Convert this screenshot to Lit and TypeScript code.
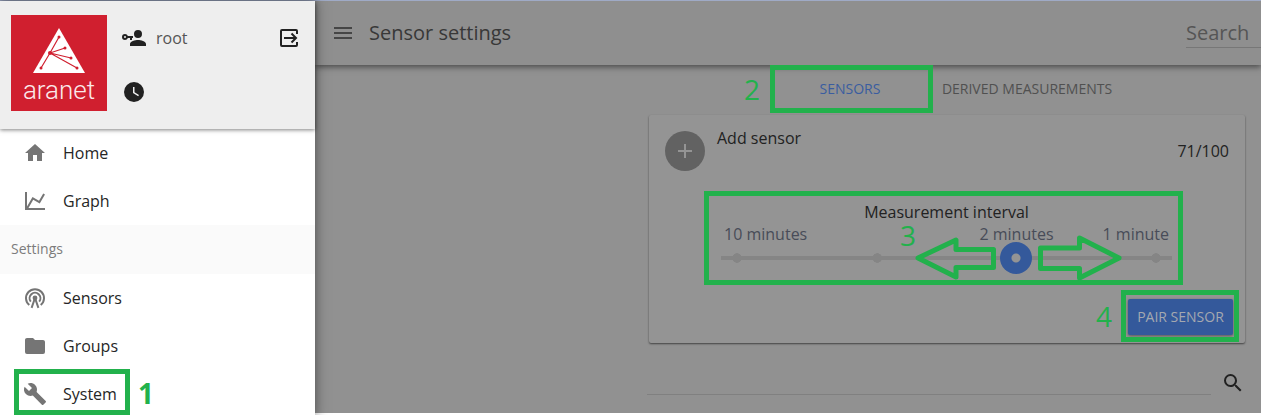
import { LitElement, html, svg, css } from "lit";
import { customElement, property, state } from "lit/decorators.js";

const ICONS: Record<string, string> = {
  home: "M10,20V14H14V20H19V12H22L12,3L2,12H5V20H10Z",
  graph: "M16,11.78L20.24,4.45L21.97,5.45L16.74,14.5L10.23,10.75L5.46,19H22V21H2V3H4V17.54L9.5,8L16,11.78Z",
  groups: "M10,4H4C2.89,4 2,4.89 2,6V18A2,2 0 0,0 4,20H20A2,2 0 0,0 22,18V8C22,6.89 21.1,6 20,6H12L10,4Z",
  system: "M22.7,19L13.6,9.9C14.5,7.6 14,4.9 12.1,3C10.1,1 7.1,0.6 4.7,1.7L9,6L6,9L1.6,4.7C0.4,7.1 0.9,10.1 2.9,12.1C4.8,14 7.5,14.5 9.8,13.6L18.9,22.7C19.3,23.1 19.9,23.1 20.3,22.7L22.6,20.4C23.1,20 23.1,19.3 22.7,19Z",
  user: "M11,10V12H10V14H8V12H5.83C5.42,13.17 4.31,14 3,14A3,3 0 0,1 0,11A3,3 0 0,1 3,8C4.31,8 5.42,8.83 5.83,10H11M3,10A1,1 0 0,0 2,11A1,1 0 0,0 3,12A1,1 0 0,0 4,11A1,1 0 0,0 3,10M16,14C18.67,14 24,15.34 24,18V20H8V18C8,15.34 13.33,14 16,14M16,12A4,4 0 0,1 12,8A4,4 0 0,1 16,4A4,4 0 0,1 20,8A4,4 0 0,1 16,12Z",
  clock: "M12,2A10,10 0 0,0 2,12A10,10 0 0,0 12,22A10,10 0 0,0 22,12A10,10 0 0,0 12,2M16.2,16.2L11,13V7H12.5V12.2L17,14.9L16.2,16.2Z",
  menu: "M3,6H21V8H3V6M3,11H21V13H3V11M3,16H21V18H3V16Z",
  plus: "M19,13H13V19H11V13H5V11H11V5H13V11H19V13Z",
  search: "M9.5,3A6.5,6.5 0 0,1 16,9.5C16,11.11 15.41,12.59 14.44,13.73L14.71,14H15.5L20.5,19L19,20.5L14,15.5V14.71L13.73,14.44C12.59,15.41 11.11,16 9.5,16A6.5,6.5 0 0,1 3,9.5A6.5,6.5 0 0,1 9.5,3M9.5,5C7,5 5,7 5,9.5C5,12 7,14 9.5,14C12,14 14,12 14,9.5C14,7 12,5 9.5,5Z",
};

@customElement("app-icon")
export class AppIcon extends LitElement {
  @property() name = "";

  static styles = css`
    :host { display: block; width: 24px; height: 24px; flex: none; }
    svg { display: block; width: 24px; height: 24px; fill: currentColor; }
    .line { fill: none; stroke: currentColor; stroke-width: 2; }
  `;

  private shape() {
    if (this.name === "sensors") {
      return svg`
        <path class="line" d="M6.3 19.1A9 9 0 1 1 17.7 19.1"></path>
        <path class="line" d="M7.8 15.6A5.4 5.4 0 1 1 16.2 15.6"></path>
        <circle cx="12" cy="12" r="2.4"></circle>
        <path class="line" d="M12 12L8.6 21.8M12 12L15.4 21.8"></path>`;
    }
    if (this.name === "exit") {
      return svg`
        <path class="line" d="M20 8V5Q20 4 19 4H5Q4 4 4 5V19Q4 20 5 20H19Q20 20 20 19V16"></path>
        <path class="line" d="M7 12H19M14.5 7.5L19 12L14.5 16.5"></path>`;
    }
    return svg`<path d=${ICONS[this.name]}></path>`;
  }

  render() {
    return html`<svg viewBox="0 0 24 24" aria-hidden="true">${this.shape()}</svg>`;
  }
}

@customElement("app-sidebar")
export class AppSidebar extends LitElement {
  static styles = css`
    :host { display: block; background: #fff; position: relative; z-index: 2; box-shadow: 0 0 12px rgba(0, 0, 0, 0.5); }
    .head { display: flex; gap: 15px; height: 128px; box-sizing: border-box; padding: 14px 14px 0 11px;
      background: #eee; position: relative; box-shadow: 0 1px 4px rgba(0, 0, 0, 0.5); color: #212121; }
    .logo { width: 96px; height: 96px; background: #d01f2f; color: #fbe9ea; display: flex; flex-direction: column;
      align-items: center; font: 300 26px/30px Roboto, sans-serif; }
    .logo svg { display: block; width: 54px; height: 46px; margin: 13px 0 1px; }
    .tri { fill: #fff; }
    .ray { fill: none; stroke: #d01f2f; stroke-width: 1.2; }
    .dot { fill: #d01f2f; }
    .account { flex: 1; display: flex; flex-direction: column; gap: 30px; padding-top: 11px; }
    .row { display: flex; align-items: center; gap: 10px; height: 24px; color: #212121; }
    .name { flex: 1; font-size: 16px; color: #555; }
    .plain { border: 0; padding: 0; background: none; color: inherit; cursor: pointer; }
    .item { display: flex; align-items: center; gap: 16px; height: 48px; padding-left: 23px; color: #757575;
      text-decoration: none; position: relative; }
    .label { color: #262626; font-size: 16px; }
    .sub { margin: 0; height: 49px; line-height: 48px; padding-left: 11px; background: #fafafa; color: #7c7c7c;
      font-size: 14px; font-weight: 400; }
    .box { position: absolute; left: 14px; top: -1px; width: 116px; height: 46px; box-sizing: border-box; border: 5px solid #22b14c; }
    .num { position: absolute; left: 138px; top: 3px; color: #22b14c; font-size: 28px; line-height: 40px; font-weight: 700; }
  `;

  private item(icon: string, label: string, mark: unknown = "") {
    return html`<a class="item" href="#${icon}"><app-icon name=${icon}></app-icon><span class="label">${label}</span>${mark}</a>`;
  }

  render() {
    return html`
      <header class="head">
        <div class="logo">
          <svg viewBox="0 0 54 46" aria-hidden="true">
            <path class="tri" d="M27 0L53 45H1Z"></path>
            <path class="ray" d="M27 9L18 25L9 40M18 25L33 20M18 25L39 30M18 25L45 40"></path>
            <circle class="dot" cx="18" cy="25" r="2"></circle>
            <circle class="dot" cx="27" cy="9" r="1.5"></circle>
            <circle class="dot" cx="9" cy="40" r="1.5"></circle>
            <circle class="dot" cx="33" cy="20" r="1.5"></circle>
            <circle class="dot" cx="39" cy="30" r="1.5"></circle>
            <circle class="dot" cx="45" cy="40" r="1.5"></circle>
          </svg>
          <span>aranet</span>
        </div>
        <div class="account">
          <div class="row">
            <app-icon name="user"></app-icon><span class="name">root</span>
            <button class="plain" aria-label="Log out"><app-icon name="exit"></app-icon></button>
          </div>
          <div class="row"><app-icon name="clock"></app-icon></div>
        </div>
      </header>
      <nav>
        ${this.item("home", "Home")}
        ${this.item("graph", "Graph")}
        <h2 class="sub">Settings</h2>
        ${this.item("sensors", "Sensors")}
        ${this.item("groups", "Groups")}
        ${this.item("system", "System", html`<span class="box"></span><span class="num">1</span>`)}
      </nav>
    `;
  }
}

@customElement("sensor-card")
export class SensorCard extends LitElement {
  @state() private step = 2;

  static styles = css`
    :host { display: block; box-sizing: border-box; height: 228px; padding: 16px; background: #949494; border-radius: 2px;
      box-shadow: 0 1px 2px rgba(0, 0, 0, 0.55); color: #222; font-size: 16px; }
    .top { display: flex; gap: 12px; height: 60px; }
    .add { width: 40px; height: 40px; border: 0; border-radius: 50%; padding: 0; background: #626262; color: #949494;
      display: grid; place-items: center; }
    .title { flex: 1; margin: 0; font-size: 16px; font-weight: 400; line-height: 14px; }
    .count { line-height: 40px; }
    .interval { position: relative; box-sizing: border-box; margin: 0 46px 0 39px; height: 94px; padding: 10px 11px 0 17px; }
    .caption { display: block; width: fit-content; margin: 0 auto; line-height: 22px; }
    .ticks { display: grid; grid-template-columns: 220fr 151fr 80fr; line-height: 22px; color: #484c58; }
    .ticks span:nth-child(1) { justify-self: start; padding-left: 3px; }
    .ticks span:nth-child(2) { justify-self: center; }
    .ticks span:nth-child(3) { justify-self: end; padding-right: 3px; }
    .slider { display: block; appearance: none; width: 100%; height: 32px; margin: -3px 0 0;
      background:
        radial-gradient(circle 5px at 16px 50%, #858585 90%, transparent),
        radial-gradient(circle 5px at calc(33.333% + 6px) 50%, #858585 90%, transparent),
        radial-gradient(circle 5px at calc(100% - 16px) 50%, #858585 90%, transparent),
        linear-gradient(#858585, #858585) center / 100% 4px no-repeat; }
    .slider::-webkit-slider-thumb { appearance: none; width: 32px; height: 32px; border-radius: 50%;
      background: radial-gradient(circle, #949494 4px, #34599b 5px); }
    .box { position: absolute; inset: 0; border: 5px solid #22b14c; pointer-events: none; }
    .arrow { position: absolute; fill: none; stroke: #22b14c; stroke-width: 5; stroke-linejoin: round; pointer-events: none; }
    .left { left: 210px; top: 44px; width: 84px; height: 48px; }
    .right { left: 333px; top: 41px; width: 86px; height: 50px; }
    .num { position: absolute; color: #22b14c; font-size: 28px; line-height: 24px; }
    .three { left: 196px; top: 32px; }
    .four { right: 121px; top: 5px; }
    .actions { display: flex; justify-content: flex-end; margin: 14px -4px 0 0; position: relative; }
    .pair { min-width: 105px; height: 36px; border: 0; border-radius: 2px; padding: 0 8px; background: #34599b; color: #a4a8b0;
      font: 14px/36px "Open Sans", sans-serif; box-shadow: 0 1px 3px rgba(0, 0, 0, 0.4); }
    .ring { position: absolute; right: -6px; top: -9px; width: 118px; height: 52px; box-sizing: border-box;
      border: 5px solid #22b14c; pointer-events: none; }
  `;

  render() {
    return html`
      <div class="top">
        <button class="add" aria-label="Add sensor"><app-icon name="plus"></app-icon></button>
        <h2 class="title">Add sensor</h2>
        <span class="count">71/100</span>
      </div>
      <div class="interval">
        <label class="caption" for="interval">Measurement interval</label>
        <div class="ticks"><span>10 minutes</span><span>2 minutes</span><span>1 minute</span></div>
        <input class="slider" id="interval" type="range" min="0" max="3" .value=${String(this.step)}
          @input=${(e: Event) => (this.step = Number((e.target as HTMLInputElement).value))} />
        <span class="box"></span>
        <span class="num three">3</span>
        <svg class="arrow left" viewBox="0 0 84 48" aria-hidden="true"><path d="M4 23L42 5V14.5H79.5V32.5H42V42Z"></path></svg>
        <svg class="arrow right" viewBox="0 0 86 50" aria-hidden="true"><path d="M3.5 16H42.5V6L82 26L42.5 46V36.5H3.5Z"></path></svg>
      </div>
      <div class="actions">
        <button class="pair">PAIR SENSOR</button>
        <span class="ring"></span>
        <span class="num four">4</span>
      </div>
    `;
  }
}

@customElement("app-root")
export class AppRoot extends LitElement {
  static styles = css`
    :host { display: block; height: 100vh; overflow: hidden; background: #fff; font-family: "Open Sans", sans-serif; }
    .shell { display: grid; grid-template-columns: 315px 1fr; border-top: 1px solid #9faac6; }
    .main { display: flex; flex-direction: column; min-width: 0; height: calc(100vh - 3px); background: #919191; overflow: hidden; }
    .bar { display: flex; align-items: center; height: 64px; flex: none; padding-left: 16px; background: #8f8f8f;
      box-shadow: 0 2px 6px rgba(0, 0, 0, 0.5); color: #454545; }
    .plain { border: 0; padding: 0; background: none; color: inherit; }
    .heading { flex: 1; margin: 0 0 0 14px; font-size: 20px; font-weight: 400; line-height: 28px; color: #383838; }
    .find { width: 75px; height: 30px; box-sizing: border-box; border: 0; border-bottom: 1px solid #777; border-radius: 0;
      padding: 0; background: none; font: 20px/28px "Open Sans", sans-serif; color: #333; outline: 0; }
    .find::placeholder { color: #555; opacity: 1; }
    .content { width: 596px; margin: 0 16px 0 auto; }
    .tabs { display: grid; grid-template-columns: 164px 190px; justify-content: center; height: 50px; position: relative; padding-right: 4px; }
    .tab { position: relative; border: 0; padding: 0 0 2px; background: none; color: #505050; font: 14px/44px "Open Sans", sans-serif; }
    .active { color: #3a5da0; }
    .box { position: absolute; left: 2px; top: 0; width: 163px; height: 48px; box-sizing: border-box; border: 5px solid #22b14c; }
    .num { position: absolute; left: -24px; top: 4px; color: #22b14c; font-size: 28px; line-height: 40px; }
    .filter { display: flex; align-items: flex-end; gap: 10px; margin: 22px 0 0 -2px; color: #212121; }
    .query { flex: 1; height: 30px; box-sizing: border-box; border: 0; border-bottom: 1px solid #808080; border-radius: 0;
      padding: 0; background: none; font: 16px "Open Sans", sans-serif; outline: 0; }
    .go { align-self: flex-start; padding-top: 6px; }
  `;

  render() {
    return html`
      <div class="shell">
        <app-sidebar></app-sidebar>
        <main class="main">
          <header class="bar">
            <button class="plain" aria-label="Menu"><app-icon name="menu"></app-icon></button>
            <h1 class="heading">Sensor settings</h1>
            <input class="find" type="text" placeholder="Search" aria-label="Search" />
          </header>
          <section class="content">
            <div class="tabs">
              <button class="tab active">SENSORS<span class="box"></span><span class="num">2</span></button>
              <button class="tab">DERIVED MEASUREMENTS</button>
            </div>
            <sensor-card></sensor-card>
            <div class="filter">
              <input class="query" type="text" aria-label="Filter sensors" />
              <button class="plain go" aria-label="Find"><app-icon name="search"></app-icon></button>
            </div>
          </section>
        </main>
      </div>
    `;
  }
}
